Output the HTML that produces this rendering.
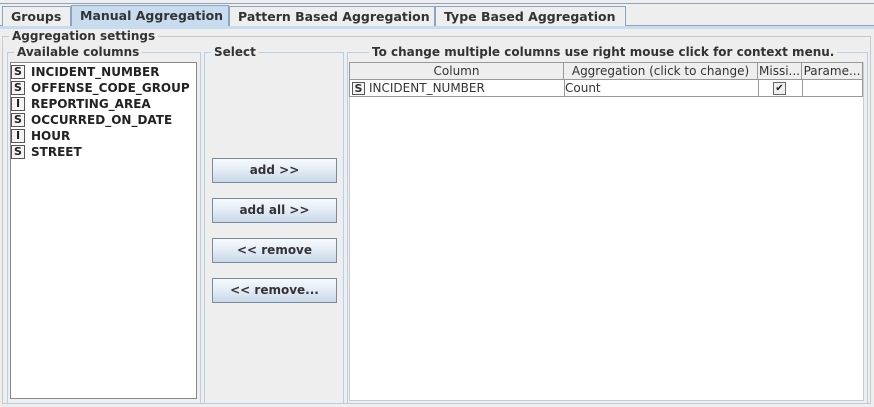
<!DOCTYPE html>
<html><head><style>
*{box-sizing:border-box;margin:0;padding:0}
body{width:874px;height:407px;background:#eeeeee;font-family:"DejaVu Sans",sans-serif;font-size:12px;color:#333;position:relative;overflow:hidden}
.a{position:absolute}
.tab{position:absolute;top:6px;height:20px;border:1px solid #8ea4be;border-bottom:none;background:#eeeeee;font-weight:bold;font-size:12.5px;line-height:19px;padding-left:8px;color:#333}
.fs{position:absolute;border:1px solid #b8cfe5}
.lg{position:absolute;background:#eeeeee;font-weight:bold;padding:0 3px;line-height:14px;color:#333}
.btn{position:absolute;left:212px;width:125px;height:25px;border:1px solid #7a8a9c;background:linear-gradient(#f6fafd,#e2ebf5 50%,#c8d9ea);font-weight:bold;text-align:center;line-height:23px;color:#333}
.it{position:absolute;left:11px;font-weight:bold;font-size:12px;line-height:16px;color:#222;white-space:nowrap}
.ic{display:inline-block;width:14px;height:14px;border:1px solid #555;font-size:11px;line-height:12px;text-align:center;margin-right:6px;vertical-align:top;margin-top:1px;background:#f4f4f4}
.th{position:absolute;top:62px;height:18px;border-right:1px solid #999;border-bottom:1px solid #999;text-align:center;line-height:17px;color:#333;background:#eeeeee;font-size:12px}
</style></head><body>
<div class="a" style="left:0;top:3px;width:874px;height:1px;background:#8ea4be"></div>
<div class="a" style="left:0;top:25px;width:874px;height:1px;background:#8ea4be"></div>
<div class="tab" style="left:2px;width:69px">Groups</div>
<div class="tab" style="left:71px;width:158px;top:5px;height:22px;background:#c8dcf0;border-bottom:none;line-height:20px">Manual Aggregation</div>
<div class="tab" style="left:229px;width:206px">Pattern Based Aggregation</div>
<div class="tab" style="left:435px;width:191px">Type Based Aggregation</div>
<div class="a" style="left:0;top:26px;width:874px;height:3px;background:#c8dcf0"></div>
<div class="fs" style="left:2px;top:36px;width:869px;height:368px;border-color:#c8c8c8"></div>
<div class="lg" style="left:9px;top:29px">Aggregation settings</div>
<div class="fs" style="left:7px;top:52px;width:194px;height:352px"></div>
<div class="lg" style="left:14px;top:45px">Available columns</div>
<div class="a" style="left:10px;top:62px;width:187px;height:337px;background:#fff;border:1px solid #888"></div>
<div class="it" style="top:64px"><span class="ic">S</span>INCIDENT_NUMBER</div>
<div class="it" style="top:80px"><span class="ic">S</span>OFFENSE_CODE_GROUP</div>
<div class="it" style="top:96px"><span class="ic">I</span>REPORTING_AREA</div>
<div class="it" style="top:112px"><span class="ic">S</span>OCCURRED_ON_DATE</div>
<div class="it" style="top:128px"><span class="ic">I</span>HOUR</div>
<div class="it" style="top:144px"><span class="ic">S</span>STREET</div>
<div class="fs" style="left:204px;top:52px;width:140px;height:352px"></div>
<div class="lg" style="left:211px;top:45px">Select</div>
<div class="btn" style="top:158px">add &gt;&gt;</div>
<div class="btn" style="top:198px">add all &gt;&gt;</div>
<div class="btn" style="top:238px">&lt;&lt; remove</div>
<div class="btn" style="top:278px">&lt;&lt; remove...</div>
<div class="fs" style="left:347px;top:52px;width:521px;height:352px"></div>
<div class="lg" style="left:369px;top:45px">To change multiple columns use right mouse click for context menu.</div>
<div class="a" style="left:349px;top:62px;width:515px;height:339px;background:#fff;border:1px solid #ccc"></div>
<div class="th" style="left:349px;width:215px;border-left:1px solid #999;border-top:1px solid #999">Column</div>
<div class="th" style="left:564px;width:194px;border-top:1px solid #999">Aggregation (click to change)</div>
<div class="th" style="left:758px;width:44px;border-top:1px solid #999">Missi...</div>
<div class="th" style="left:802px;width:61px;border-top:1px solid #999">Parame...</div>
<div class="a" style="left:349px;top:80px;width:514px;height:17px;border:1px solid #999;border-top:none"></div>
<div class="a" style="left:564px;top:80px;width:1px;height:17px;background:#999"></div>
<div class="a" style="left:758px;top:80px;width:1px;height:17px;background:#999"></div>
<div class="a" style="left:802px;top:80px;width:1px;height:17px;background:#999"></div>
<div class="a" style="left:352px;top:81px;line-height:15px;color:#333"><span class="ic" style="font-weight:bold;width:13px;height:13px;margin-right:4px;margin-top:1px;line-height:11px">S</span>INCIDENT_NUMBER</div>
<div class="a" style="left:565px;top:81px;line-height:15px;color:#333">Count</div>
<div class="a" style="left:773px;top:82px;width:13px;height:13px;border:1px solid #666;background:#f0f0f0;font-size:10px;line-height:11px;text-align:center;color:#222">✔</div>
</body></html>
